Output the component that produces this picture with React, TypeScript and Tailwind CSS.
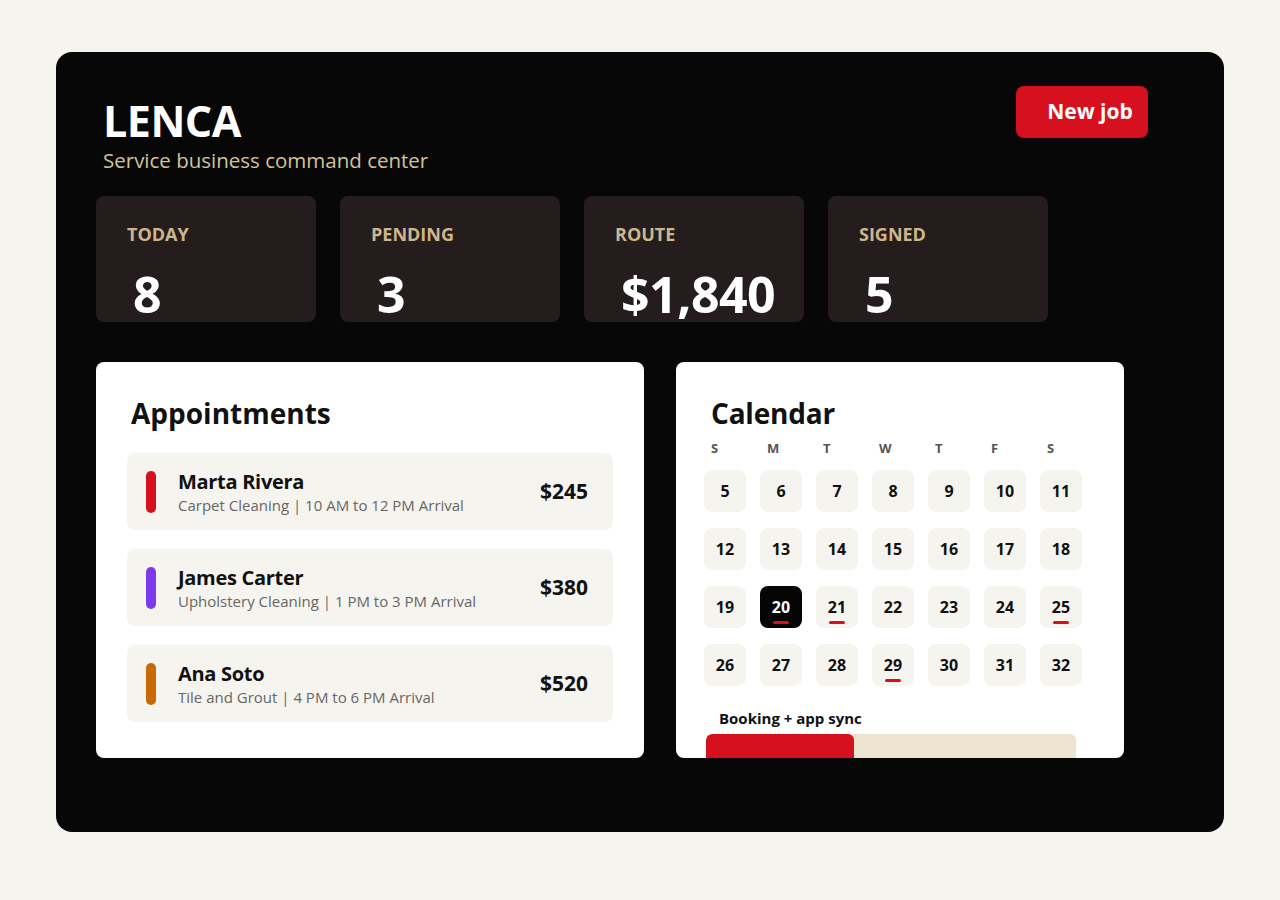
import React from 'react';

const stats = [
  { label: 'Today', value: '8' },
  { label: 'Pending', value: '3' },
  { label: 'Route', value: '$1,840' },
  { label: 'Signed', value: '5' },
];

const appointments = [
  { name: 'Marta Rivera', detail: 'Carpet Cleaning | 10 AM to 12 PM Arrival', price: '$245', color: 'bg-[#d7101f]' },
  { name: 'James Carter', detail: 'Upholstery Cleaning | 1 PM to 3 PM Arrival', price: '$380', color: 'bg-[#7c3aed]' },
  { name: 'Ana Soto', detail: 'Tile and Grout | 4 PM to 6 PM Arrival', price: '$520', color: 'bg-[#c76a05]' },
];

const weekdays = ['S', 'M', 'T', 'W', 'T', 'F', 'S'];
const days = Array.from({ length: 28 }, (_, i) => i + 5);
const marked = [20, 21, 25, 29];
const selected = 20;

export default function App() {
  return (
    <div className="min-h-[900px] bg-[#f6f4ef] pt-[52px] px-[56px] font-['Open_Sans','Noto_Sans',sans-serif]">
      <div className="h-[780px] rounded-[16px] bg-[#070707] px-[40px] pt-[34px]">
        {/* Header */}
        <div className="flex h-[86px] items-start justify-between">
          <div className="pl-[7px] pt-[11px]">
            <h1 className="text-[43px] leading-[48px] font-bold text-white tracking-[-0.5px]">LENCA</h1>
            <p className="mt-[2px] text-[20.5px] leading-[26px] text-[#d3c39b]">Service business command center</p>
          </div>
          <button className="mr-[36px] h-[52px] w-[132px] rounded-[8px] bg-[#d7101f] text-[21px] font-bold text-white pl-[16px]">
            New job
          </button>
        </div>

        {/* Stats */}
        <div className="mt-[24px] flex gap-[24px]">
          {stats.map((s) => (
            <div key={s.label} className="h-[126px] w-[220px] rounded-[8px] bg-[#241c1d] pl-[31px] pt-[27px]">
              <div className="text-[18px] leading-[22px] font-bold uppercase text-[#cdb78a]">{s.label}</div>
              <div className="mt-[23px] pl-[6px] text-[50px] leading-[52px] font-bold text-white tracking-[-0.5px]">{s.value}</div>
            </div>
          ))}
        </div>

        {/* Panels */}
        <div className="mt-[40px] flex gap-[32px]">
          <div className="h-[396px] w-[548px] rounded-[8px] bg-white px-[31px] pt-[33px]">
            <h2 className="pl-[4px] text-[28px] leading-[36px] font-bold text-[#111]">Appointments</h2>
            <div className="mt-[22px] flex flex-col gap-[19px]">
              {appointments.map((a) => (
                <div key={a.name} className="flex h-[77px] items-center rounded-[8px] bg-[#f6f4ef] pl-[19px] pr-[25px]">
                  <div className={`h-[42px] w-[10px] rounded-full ${a.color}`} />
                  <div className="ml-[22px] flex-1">
                    <div className="text-[20px] leading-[26px] font-bold text-[#111] tracking-[-0.3px]">{a.name}</div>
                    <div className="text-[15px] leading-[20px] text-[#666]">{a.detail}</div>
                  </div>
                  <div className="text-[21px] font-bold text-[#111]">{a.price}</div>
                </div>
              ))}
            </div>
          </div>

          <div className="h-[396px] w-[448px] overflow-hidden rounded-[8px] bg-white pl-[28px] pr-[42px] pt-[33px]">
            <h2 className="pl-[7px] text-[28px] leading-[36px] font-bold text-[#111] tracking-[-0.2px]">Calendar</h2>
            <div className="mt-[8px] grid grid-cols-[repeat(7,42px)] gap-x-[14px]">
              {weekdays.map((d, i) => (
                <div key={i} className="pl-[7px] text-[13px] leading-[18px] font-bold text-[#555]">{d}</div>
              ))}
            </div>
            <div className="mt-[13px] grid grid-cols-[repeat(7,42px)] gap-x-[14px] gap-y-[16px]">
              {days.map((d) => {
                const isSel = d === selected;
                return (
                  <div
                    key={d}
                    className={`relative flex h-[42px] w-[42px] items-center justify-center rounded-[8px] text-[16px] font-bold ${isSel ? 'bg-[#050505] text-white' : 'bg-[#f6f4ef] text-[#111]'}`}
                  >
                    {d}
                    {marked.includes(d) && (
                      <span className="absolute bottom-[4px] left-1/2 h-[3px] w-[16px] -translate-x-1/2 rounded-full bg-[#d7101f]" />
                    )}
                  </div>
                );
              })}
            </div>
            <div className="mt-[22px] pl-[15px] text-[15px] leading-[20px] font-bold text-[#111]">Booking + app sync</div>
            <div className="mt-[6px] h-[30px] w-[370px] overflow-hidden rounded-[6px] bg-[#ede4d0] ml-[2px]">
              <div className="h-full rounded-[6px] bg-[#d7101f]" style={{ width: '40%' }} />
            </div>
          </div>
        </div>
      </div>
    </div>
  );
}
